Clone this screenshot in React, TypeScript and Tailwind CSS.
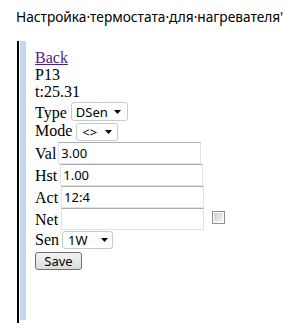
import React from "react";

function Arrow() {
  return (
    <svg width="7" height="4" viewBox="0 0 7 4" className="shrink-0">
      <path d="M0 0 H7 L3.5 4 Z" fill="#000" />
    </svg>
  );
}

function Sel({ text, w, h, pl, pr }: { text: string; w: string; h: string; pl: string; pr: string }) {
  return (
    <div
      className={`flex items-center justify-between ${w} ${h} ${pl} ${pr} border border-[#c9c9c9] rounded-[3px] bg-white font-['Noto_Sans'] text-[13px] leading-[16px] text-black`}
    >
      <span>{text}</span>
      <Arrow />
    </div>
  );
}

function Inp({ value }: { value: string }) {
  return (
    <input
      readOnly
      value={value}
      className="w-[143px] h-[22px] border border-[#dfe2e8] border-t-[#abadb3] bg-white pl-[2px] font-['Noto_Sans'] text-[13px] text-black outline-none"
    />
  );
}

export default function App() {
  return (
    <div className="w-[285px] h-[334px] bg-white overflow-hidden font-['Liberation_Serif',serif] text-black">
      <div className="pt-[8px] pl-[16px] h-[25px] whitespace-nowrap font-['Noto_Sans',sans-serif] text-[13.7px] leading-[17px]">
        Настройка·термостата·для·нагревателя'
      </div>
      <div className="ml-[17px] mt-[16px] flex h-[282px]">
        <div className="w-[2px] bg-black" />
        <div className="w-[1px]" />
        <div className="w-[6px] bg-[#c3d8eb] mb-[3px]" />
        <div className="pl-[9px] pt-[8px] text-[16px] leading-[17px]">
          <div>
            <a href="#" className="text-[#551a8b] underline">Back</a>
          </div>
          <div>P13</div>
          <div>t:25.31</div>
          <div className="flex items-start gap-[4px] h-[22px]">
            <span className="mt-[4px]">Type</span>
            <div className="mt-[2px]">
              <Sel text="DSen" w="w-[57px]" h="h-[19px]" pl="pl-[4px]" pr="pr-[6px]" />
            </div>
          </div>
          <div className="flex items-start gap-[4px] h-[20px]">
            <span className="mt-[0px]">Mode</span>
            <div className="mt-[1px]">
              <Sel text="<>" w="w-[42px]" h="h-[18px]" pl="pl-[5px]" pr="pr-[5px]" />
            </div>
          </div>
          <div className="flex items-start gap-[2px] h-[22px]">
            <span className="mt-[3px]">Val</span>
            <Inp value="3.00" />
          </div>
          <div className="flex items-start gap-[3px] h-[22px]">
            <span className="mt-[3px]">Hst</span>
            <Inp value="1.00" />
          </div>
          <div className="flex items-start gap-[3px] h-[22px]">
            <span className="mt-[3px]">Act</span>
            <Inp value="12:4" />
          </div>
          <div className="flex items-start gap-[3px] h-[22px]">
            <span className="mt-[3px]">Net</span>
            <Inp value="" />
            <div className="ml-[5px] mt-[3px] w-[13px] h-[13px] border border-[#8e8f8f] bg-white p-[1px]">
              <div className="w-full h-full bg-gradient-to-br from-[#cfcfcf] to-[#f4f4f4]" />
            </div>
          </div>
          <div className="flex items-start gap-[3px] h-[22px]">
            <span className="mt-[1px]">Sen</span>
            <div className="mt-[1px]">
              <Sel text="1W" w="w-[51px]" h="h-[18px]" pl="pl-[5px]" pr="pr-[4px]" />
            </div>
          </div>
          <div className="h-[20px]">
            <button className="w-[47px] h-[18px] border border-[#707070] rounded-[3px] bg-gradient-to-b from-[#f3f3f3] to-[#dcdcdc] font-['Noto_Sans'] text-[13px] leading-[14px] text-black">
              Save
            </button>
          </div>
        </div>
      </div>
    </div>
  );
}
